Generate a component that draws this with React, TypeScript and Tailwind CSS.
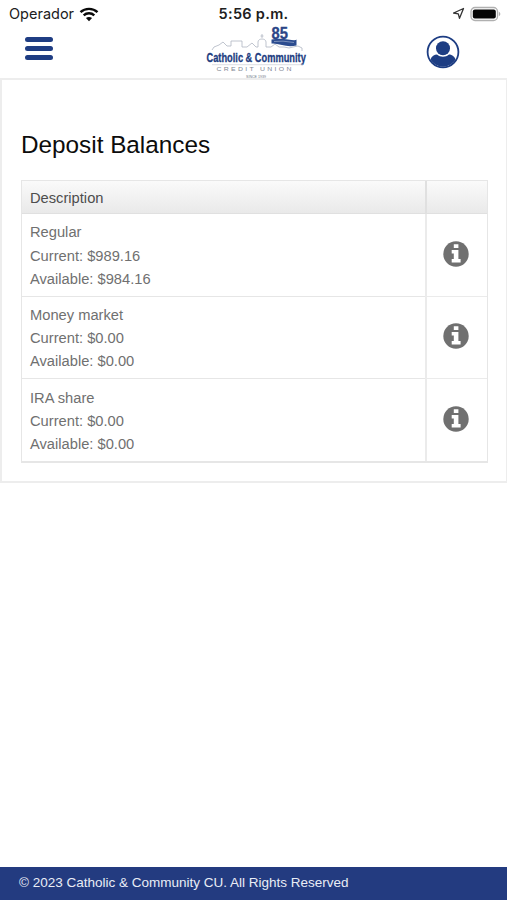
const accounts = [
  { name: "Regular", current: "$989.16", available: "$984.16" },
  { name: "Money market", current: "$0.00", available: "$0.00" },
  { name: "IRA share", current: "$0.00", available: "$0.00" },
];

function WifiIcon() {
  return (
    <svg width="20" height="15" viewBox="0 0 20 15" fill="none" stroke="#0a0a0a" strokeWidth="2.4">
      <path d="M1.5 5.2C6.2 .7 13.8 .7 18.5 5.2" />
      <path d="M4.7 8.4C7.7 5.6 12.3 5.6 15.3 8.4" />
      <path d="M10 14.2 6.9 11.1C8.6 9.6 11.4 9.6 13.1 11.1Z" fill="#0a0a0a" stroke="none" />
    </svg>
  );
}

function Logo() {
  return (
    <svg width="108" height="54" viewBox="-3 0 108 54" fontFamily="'Liberation Sans', Arial, sans-serif">
      <path
        d="M7 25 9 22 14 20 18 17 22 21H26V16H37V22H42L47 18 51 22H53V17C53 13 61 13 61 17V22H66L70 19 74 22H79L84 23 88 22 93 21 97 23V26M57 13V9M55.500 11H58.500"
        fill="none" stroke="#aeb5c1" strokeWidth=".8"
      />
      <g transform="translate(66.500 13.500) scale(.92 1)">
        <text fontSize="16" fontWeight="700" fill="#2b4587" stroke="#2b4587" strokeWidth=".3">85</text>
      </g>
      <path d="M66.500 14.500Q75 13 83 14.500T91.500 14.500V20.500Q84 22 77 20T66.500 18.500Z" fill="#2b4c8f" />
      <path d="M69 16.500Q77 15.300 89 17.500" stroke="#8da0c4" strokeWidth=".8" fill="none" />
      <g transform="translate(1.500 36.500) scale(.725 1)">
        <text fontSize="12.800" fontWeight="700" fill="#203b80" stroke="#203b80" strokeWidth=".3">Catholic &amp; Community</text>
      </g>
      <path d="M7 39.700H98" stroke="#c6cad1" strokeWidth=".6" />
      <g transform="translate(11.500 46.300) scale(1.250 1)">
        <text fontSize="5.500" fill="#7f8794" letterSpacing="1.850">CREDIT UNION</text>
      </g>
      <text x="41" y="52.500" fontSize="3.600" fill="#6c7686">SINCE 1939</text>
    </svg>
  );
}

function UserIcon() {
  return (
    <svg width="34" height="34" viewBox="0 0 34 34">
      <circle cx="17" cy="17" r="15.400" fill="#fff" stroke="#1d3d83" strokeWidth="1.800" />
      <circle cx="17" cy="13.300" r="7" fill="#1d3d83" />
      <path d="M4.500 24.500C5.500 21 8.500 19.500 11 19.500C14.500 22.500 19.500 22.500 23 19.500C25.500 19.500 28.500 21 29.500 24.500C24 34 10 34 4.500 24.500Z" fill="#1d3d83" />
    </svg>
  );
}

function InfoIcon() {
  return (
    <svg width="26" height="26" viewBox="0 0 26 26">
      <circle cx="13" cy="13" r="12.700" fill="#707070" />
      <path d="M10.800 3.200H15.400V7H10.800ZM8.700 9H15.400V18H17.600V21.600H8.700V18H10.800V12.500H8.700Z" fill="#fff" />
    </svg>
  );
}

export default function App() {
  return (
    <div className="flex h-[900px] w-[507px] flex-col bg-white font-['Liberation_Sans',Arial,sans-serif]">
      <div className="grid h-7 grid-cols-3 items-center text-[#202020]">
        <div className="flex items-center gap-1 pl-[9px] font-['Inter',sans-serif] text-[14.5px]">
          <span className="w-[66px] whitespace-nowrap">Operador</span>
          <WifiIcon />
        </div>
        <span className="whitespace-nowrap text-center font-['Inter',sans-serif] text-[14.5px] font-semibold tracking-[0.3px]">5:56 p.m.</span>
        <div className="flex items-center justify-end gap-[5px] pr-[6px]">
          <svg className="-mt-px" width="13" height="13" viewBox="0 0 13 13" fill="none" stroke="#333" strokeWidth="1.300" strokeLinejoin="round">
            <path d="M11.500 1.500 7.500 11.300 6.300 6.900 1.600 6Z" />
          </svg>
          <svg className="-mt-px" width="31" height="16" viewBox="0 0 31 16">
            <rect x="1" y="1.500" width="26.500" height="13" rx="4" fill="white" stroke="#b0b0b0" strokeWidth="1.300" />
            <rect x="2.800" y="3.400" width="23" height="9.200" rx="2" fill="#050505" />
            <path d="M28.800 5.500Q32 7.900 28.800 10.300Z" fill="#b0b0b0" />
          </svg>
        </div>
      </div>

      <header className="flex h-[50px] items-start justify-between pr-[47px] pl-[25px]">
        <div className="mt-[9px] flex w-7 flex-col gap-[4px]">
          <span className="h-[5px] rounded-sm bg-[#1f3d83]" />
          <span className="h-[5px] rounded-sm bg-[#1f3d83]" />
          <span className="h-[5px] rounded-sm bg-[#1f3d83]" />
        </div>
        <div className="-mt-[3px] ml-[32px]">
          <Logo />
        </div>
        <div className="mt-[7px]">
          <UserIcon />
        </div>
      </header>

      <main className="h-[405px] border-t-2 border-r border-b-2 border-l-2 border-[#ededed] pt-[50px] pr-[18px] pl-[19px]">
        <h1 className="h-[50px] text-[24.3px] leading-[30px] text-[#0c0c0c]">Deposit Balances</h1>
        <table className="w-[467px] table-fixed border-separate border-spacing-0 border border-b-2 border-[#e6e6e6] text-[14.7px] text-[#707070]">
          <colgroup>
            <col className="w-[403px]" />
            <col />
          </colgroup>
          <thead>
            <tr className="h-[33px] bg-linear-to-b from-[#fafafa] to-[#e9e9e9]">
              <th className="border-b border-[#e0e0e0] p-0 pt-[3px] pl-[8px] text-left font-normal text-[#4d4d4d]">Description</th>
              <th className="border-b border-l-2 border-[#e0e0e0] p-0" />
            </tr>
          </thead>
          <tbody>
            {accounts.map((account) => (
              <tr key={account.name} className="group h-[82.5px] last:h-[82px]">
                <td className="border-b border-[#e6e6e6] p-0 pt-[3px] pl-[8px] leading-[23.2px] group-last:border-b-0">
                  <p>{account.name}</p>
                  <p>Current: {account.current}</p>
                  <p>Available: {account.available}</p>
                </td>
                <td className="border-b border-l-2 border-[#ebebeb] p-0 pr-[3px] pb-[2px] group-last:border-b-0">
                  <div className="flex justify-center">
                    <InfoIcon />
                  </div>
                </td>
              </tr>
            ))}
          </tbody>
        </table>
      </main>

      <footer className="mt-auto flex h-[33px] items-center bg-[#233b80] pl-[19px] text-[13.5px] text-[#e9edf6]">
        © 2023 Catholic &amp; Community CU. All Rights Reserved
      </footer>
    </div>
  );
}
